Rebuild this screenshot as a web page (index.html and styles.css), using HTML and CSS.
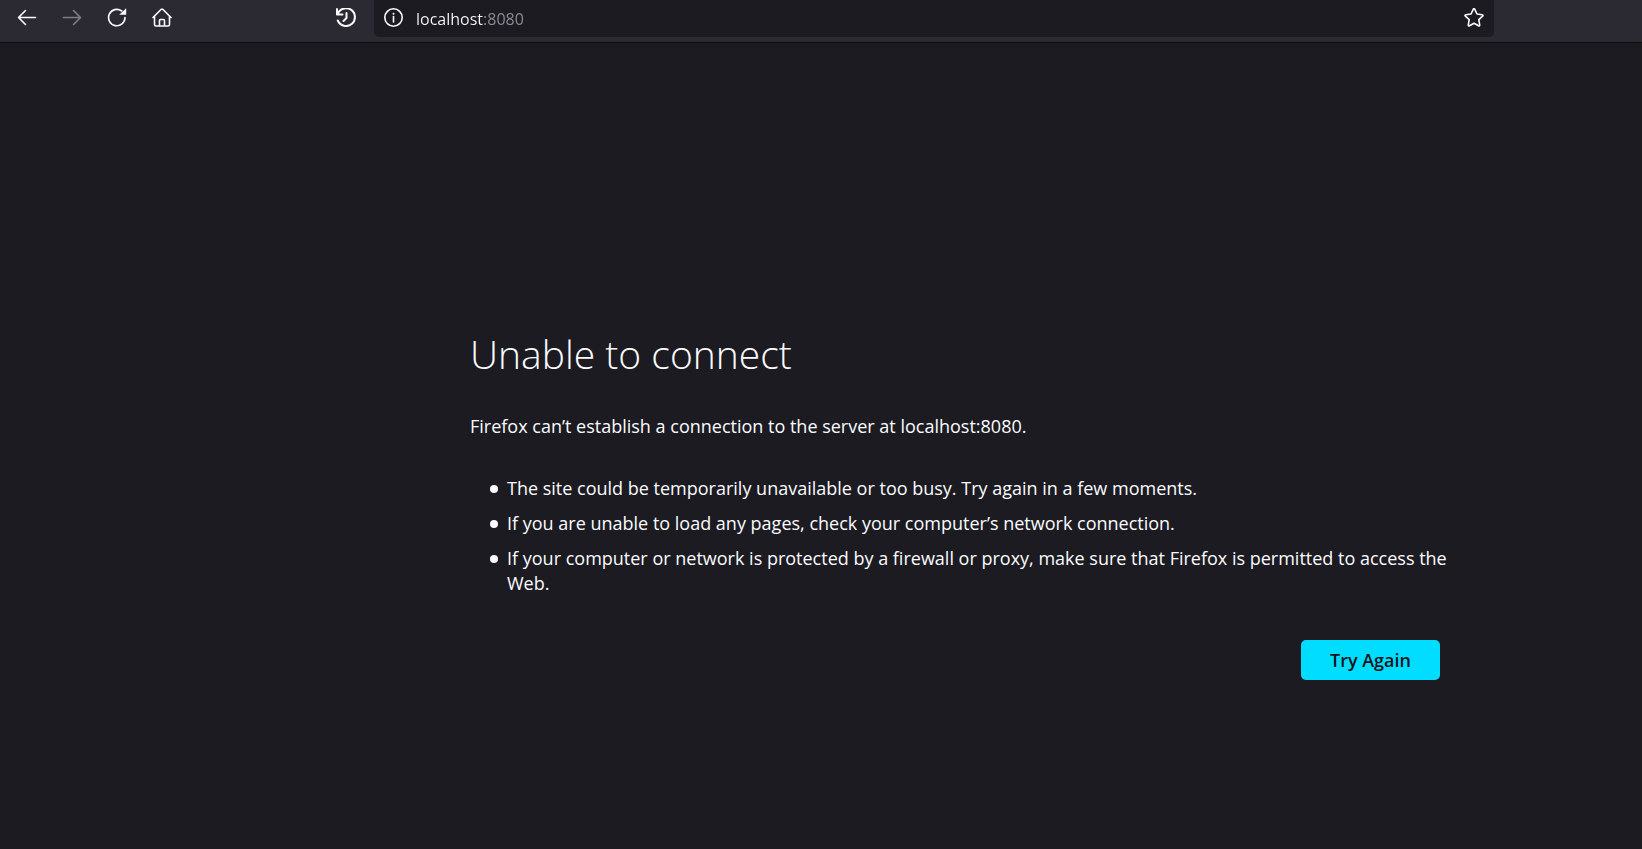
FILE: index.html
```html
<!DOCTYPE html>
<html lang="en">
<head>
<meta charset="utf-8">
<title>Problem loading page</title>
<link rel="stylesheet" href="styles.css">
</head>
<body>
<header class="toolbar">
  <nav class="nav-buttons" aria-label="Navigation">
    <button class="tool-button" type="button" aria-label="Back">
      <svg class="icon" viewBox="0 0 20 20"><path d="M18.5 9.5H1.5M8.500 2.500l-7 7 7 7"/></svg>
    </button>
    <button class="tool-button" type="button" aria-label="Forward" disabled>
      <svg class="icon" viewBox="0 0 20 20"><path d="M1.500 9.500h17M11.500 2.500l7 7-7 7"/></svg>
    </button>
    <button class="tool-button" type="button" aria-label="Reload">
      <svg class="icon" viewBox="0 0 20 20"><path d="M18 9.500a8.200 8.200 0 1 1-3.300-6.500"/><path class="solid" d="M19.200.300V6.800H12.200z"/></svg>
    </button>
    <button class="tool-button" type="button" aria-label="Home">
      <svg class="icon" viewBox="0 0 20 20"><path d="M1 9.500 9 1.500q1-.8 2 0l8 8M2.500 8.500V16.500q0 1.500 1.500 1.500h12q1.500 0 1.500-1.500V8.500M7.500 18v-5.500q0-1 1-1h3q1 0 1 1V18"/></svg>
    </button>
  </nav>
  <div class="spacer"></div>
  <button class="tool-button" type="button" aria-label="History">
    <svg class="icon bold" viewBox="0 0 20 20"><path d="M1 1v5.500H6.500M1.500 6.500A8.900 8.900 0 1 1 1.800 12.500"/><path d="M10.500 5v5l-3 3"/></svg>
  </button>
  <div class="url-bar">
    <button class="bar-button" type="button" aria-label="Site information">
      <svg class="icon" viewBox="0 0 20 20"><circle cx="9.500" cy="9.500" r="8.700"/><path d="M9.500 8.500V14"/><circle class="solid" cx="9.500" cy="5.700" r="1"/></svg>
    </button>
    <input class="url-input" type="text" value="localhost:8080" aria-label="Address">
    <button class="bar-button" type="button" aria-label="Bookmark this page">
      <svg class="icon" viewBox="0 0 20 20"><path d="M9.200 1.300q.8-1.300 1.600 0l2.200 4.700 5.200.7q1.400.3.400 1.400l-3.800 3.600.9 5.200q.1 1.400-1.200.9L10 15.300l-4.500 2.500q-1.300.5-1.200-.9l.9-5.200L1.400 8.100q-1-1.100.4-1.400L7 6z"/></svg>
    </button>
  </div>
</header>
<main class="page">
  <div class="error">
    <h1 class="title">Unable to connect</h1>
    <p class="summary">Firefox can’t establish a connection to the server at localhost:8080.</p>
    <ul class="hints">
      <li>The site could be temporarily unavailable or too busy. Try again in a few moments.</li>
      <li>If you are unable to load any pages, check your computer’s network connection.</li>
      <li>If your computer or network is protected by a firewall or proxy, make sure that Firefox is permitted to access the Web.</li>
    </ul>
    <div class="actions"><button class="primary" type="button">Try Again</button></div>
  </div>
</main>
</body>
</html>
```

FILE: styles.css
```css
* { box-sizing: border-box; }

body {
  margin: 0;
  min-height: 100vh;
  display: flex;
  flex-direction: column;
  background: #1c1b22;
  color: #fbfbfe;
  font: 18px/25px "Open Sans", "Noto Sans", sans-serif;
}

button { border: 0; padding: 0; font: inherit; color: inherit; background: none; }

.toolbar {
  display: flex;
  align-items: flex-start;
  padding: 0 9% 0 7px;
  height: 43px;
  background: #2b2a33;
  border-bottom: 1px solid #0c0c0d;
}

.nav-buttons { display: flex; gap: 5px; }
.spacer { width: 144px; }

.tool-button, .bar-button {
  display: flex;
  align-items: center;
  justify-content: center;
  width: 40px;
  height: 36px;
  flex: none;
}
.bar-button { height: 35px; }
.tool-button:disabled { opacity: 0.4; }

.icon {
  width: 20px;
  height: 20px;
  fill: none;
  stroke: #fbfbfe;
  stroke-width: 1.6;
  stroke-linecap: round;
  stroke-linejoin: round;
}
.icon.bold { stroke-width: 2; }
.icon .solid { fill: #fbfbfe; stroke: none; }

.url-bar {
  flex: 1;
  display: flex;
  margin-left: 8px;
  height: 37px;
  background: #1c1b22;
  border-radius: 0 0 5px 5px;
}

.url-input {
  flex: 1;
  min-width: 0;
  border: 0;
  padding: 0 0 0 2px;
  font: 16px/24px "Open Sans", "Noto Sans", sans-serif;
  color: transparent;
  caret-color: #fbfbfe;
  background: linear-gradient(to right, #fbfbfe 69px, #8f8f9a 69px);
  background-clip: text;
}

.page {
  flex: 1;
  display: flex;
  align-items: center;
  justify-content: center;
  padding: 118px 0 0 268px;
}
.error { width: 100%; max-width: 970px; }

.title {
  margin: 0 0 36px;
  font-size: 39px;
  line-height: 48px;
  font-weight: 300;
}
.summary { margin: 0 0 37px; }

.hints {
  margin: 0 -20px 44px 0;
  padding-left: 20px;
  list-style: none;
}
.hints li {
  display: grid;
  grid-template-columns: 8px 1fr;
  column-gap: 9px;
}
.hints li::before {
  content: "";
  height: 8px;
  margin-top: 9px;
  border-radius: 50%;
  background: #fbfbfe;
}
.hints li + li { margin-top: 10px; }

.actions { display: flex; justify-content: flex-end; }

.primary {
  padding: 0 29px;
  height: 40px;
  border-radius: 5px;
  background: #00ddff;
  color: #15141a;
  font-weight: 600;
}
```
